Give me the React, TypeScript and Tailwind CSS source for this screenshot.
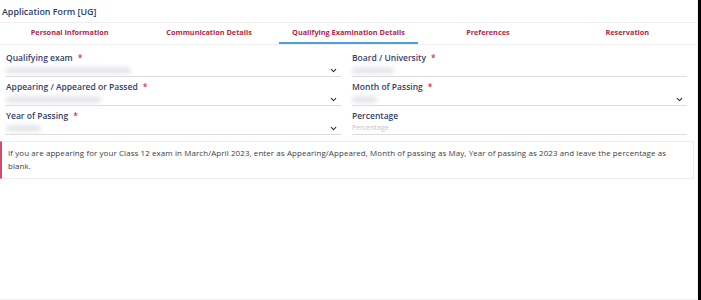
import { ChevronDown } from 'lucide-react';

const tabs = ['Personal Information', 'Communication Details', 'Qualifying Examination Details', 'Preferences', 'Reservation'];

function Blur({ w }: { w: number }) {
  return <span className="block h-[7px] rounded-full bg-gray-200 blur-[2px]" style={{ width: w }} />;
}

function Field({ label, required, value, chevron, placeholder }: {
  label: string; required?: boolean; value?: number; chevron?: boolean; placeholder?: string;
}) {
  return (
    <div className="flex flex-col pt-[5px]">
      <div className="h-[10px] text-[8.5px] font-semibold leading-[10px] text-[#33416a]">
        {label}{required && <span className="ml-[5px] text-[#d0334d]">*</span>}
      </div>
      <div className="flex h-[14px] items-center justify-between border-b border-[#dcdcdc] pr-[3px] pt-[2px]">
        {placeholder
          ? <span className="text-[7px] text-[#c4c4c4]">{placeholder}</span>
          : value ? <Blur w={value} /> : <span />}
        {chevron && <ChevronDown size={9} strokeWidth={3} className="text-[#333]" />}
      </div>
    </div>
  );
}

export default function App() {
  return (
    <div className="h-[300px] w-[701px] overflow-hidden bg-white font-['Open_Sans',sans-serif]">
      <div className="flex h-full">
        <div className="flex h-full w-[698px] flex-col border-r border-b border-[#eeeeee]">
          <h1 className="px-[2px] pt-[5px] pb-[4px] text-[8.9px] font-semibold leading-[13px] text-[#2c3d63]">Application Form [UG]</h1>
          <div className="grid grid-cols-5 border-y border-[#eeeeee]">
            {tabs.map((t, i) => (
              <div key={t} className={`flex h-[21px] items-center justify-center text-[7.3px] font-bold text-[#b02a48] ${i === 2 ? 'border-b-2 border-[#4a9fe0]' : 'border-b-2 border-transparent'}`}>
                {t}
              </div>
            ))}
          </div>
          <div className="grid grid-cols-2 gap-x-[11px] pl-[6px] pr-[10px] pt-[3px]">
            <Field label="Qualifying exam" required value={125} chevron />
            <Field label="Board / University" required value={42} />
            <Field label="Appearing / Appeared or Passed" required value={95} chevron />
            <Field label="Month of Passing" required value={25} chevron />
            <Field label="Year of Passing" required value={35} chevron />
            <Field label="Percentage" placeholder="Percentage" />
          </div>
          <div className="mt-[6px] mr-[3px] border border-l-2 border-[#ececec] border-l-[#d24a6a] pl-[6px] pr-[14px] py-[5px] text-[7.95px] leading-[13px] tracking-[0.1px] text-[#3d3d3d]">
            If you are appearing for your Class 12 exam in March/April 2023, enter as Appearing/Appeared, Month of passing as May, Year of passing as 2023 and leave the percentage as blank.
          </div>
        </div>
        <div className="h-full w-[3px] bg-black" />
      </div>
    </div>
  );
}
